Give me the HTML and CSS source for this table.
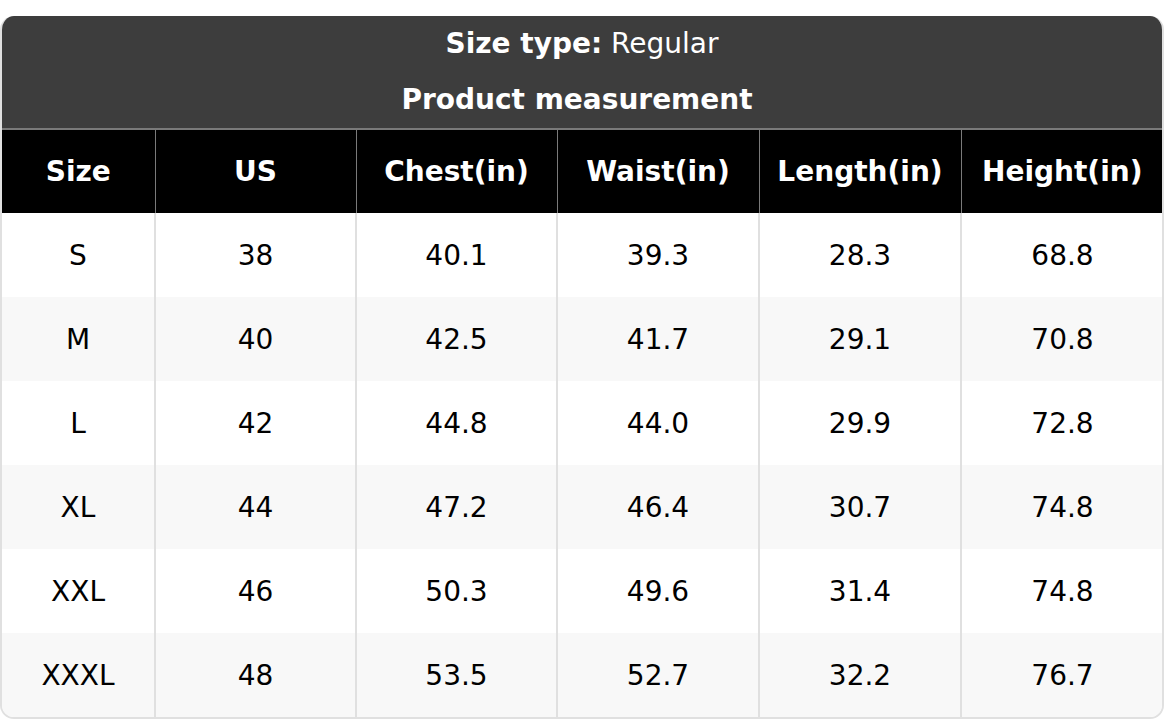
FILE: index.html
```html
<!DOCTYPE html>
<html>
<head>
<meta charset="utf-8">
<link rel="stylesheet" href="styles.css">
</head>
<body>
<div class="wrap">
  <div class="title">
    <div class="title-line"><b>Size type:</b> Regular</div>
    <div class="title-line title-sub"><b>Product measurement</b></div>
  </div>
  <table class="chart">
    <colgroup>
      <col class="c1"><col class="c2"><col class="c2"><col class="c3"><col class="c3"><col class="c3">
    </colgroup>
    <thead>
      <tr><th>Size</th><th>US</th><th>Chest(in)</th><th>Waist(in)</th><th>Length(in)</th><th>Height(in)</th></tr>
    </thead>
    <tbody>
      <tr><td>S</td><td>38</td><td>40.1</td><td>39.3</td><td>28.3</td><td>68.8</td></tr>
      <tr><td>M</td><td>40</td><td>42.5</td><td>41.7</td><td>29.1</td><td>70.8</td></tr>
      <tr><td>L</td><td>42</td><td>44.8</td><td>44.0</td><td>29.9</td><td>72.8</td></tr>
      <tr><td>XL</td><td>44</td><td>47.2</td><td>46.4</td><td>30.7</td><td>74.8</td></tr>
      <tr><td>XXL</td><td>46</td><td>50.3</td><td>49.6</td><td>31.4</td><td>74.8</td></tr>
      <tr><td>XXXL</td><td>48</td><td>53.5</td><td>52.7</td><td>32.2</td><td>76.7</td></tr>
    </tbody>
  </table>
</div>
</body>
</html>
```

FILE: styles.css
```css
html, body {
  margin: 0;
  padding: 0;
  background: #fff;
}
body {
  padding-top: 16px;
  font-family: "DejaVu Sans", Verdana, sans-serif;
  color: #000;
}
.wrap {
  width: 1164px;
  box-sizing: border-box;
  border: 2px solid #e0e0e0;
  border-top: none;
  border-radius: 14px;
  overflow: hidden;
}
.title {
  background: #3d3d3d;
  color: #fff;
  text-align: center;
  font-size: 28px;
  margin: 0 -2px;
}
.title-line {
  height: 56px;
  line-height: 56px;
}
.title-sub {
  padding-right: 10px;
}
.chart {
  width: 100%;
  border-collapse: collapse;
  table-layout: fixed;
  font-size: 28px;
}
.c1 { width: 153px; }
.c2 { width: 201px; }
.c3 { width: 202px; }
.chart th {
  background: #000;
  color: #fff;
  font-weight: bold;
  height: 84px;
  padding: 0;
  text-align: center;
  border-top: 2px solid #7a7a7a;
  border-left: 1px solid #7a7a7a;
  border-right: 1px solid #7a7a7a;
  box-sizing: border-box;
}
.chart td {
  height: 84px;
  padding: 0;
  text-align: center;
  border-left: 2px solid #e0e0e0;
  border-right: 2px solid #e0e0e0;
  box-sizing: border-box;
}
.chart th:first-child, .chart td:first-child { border-left: none; }
.chart th:last-child, .chart td:last-child { border-right: none; }
.chart tbody tr:nth-child(even) td { background: #f8f8f8; }
```
